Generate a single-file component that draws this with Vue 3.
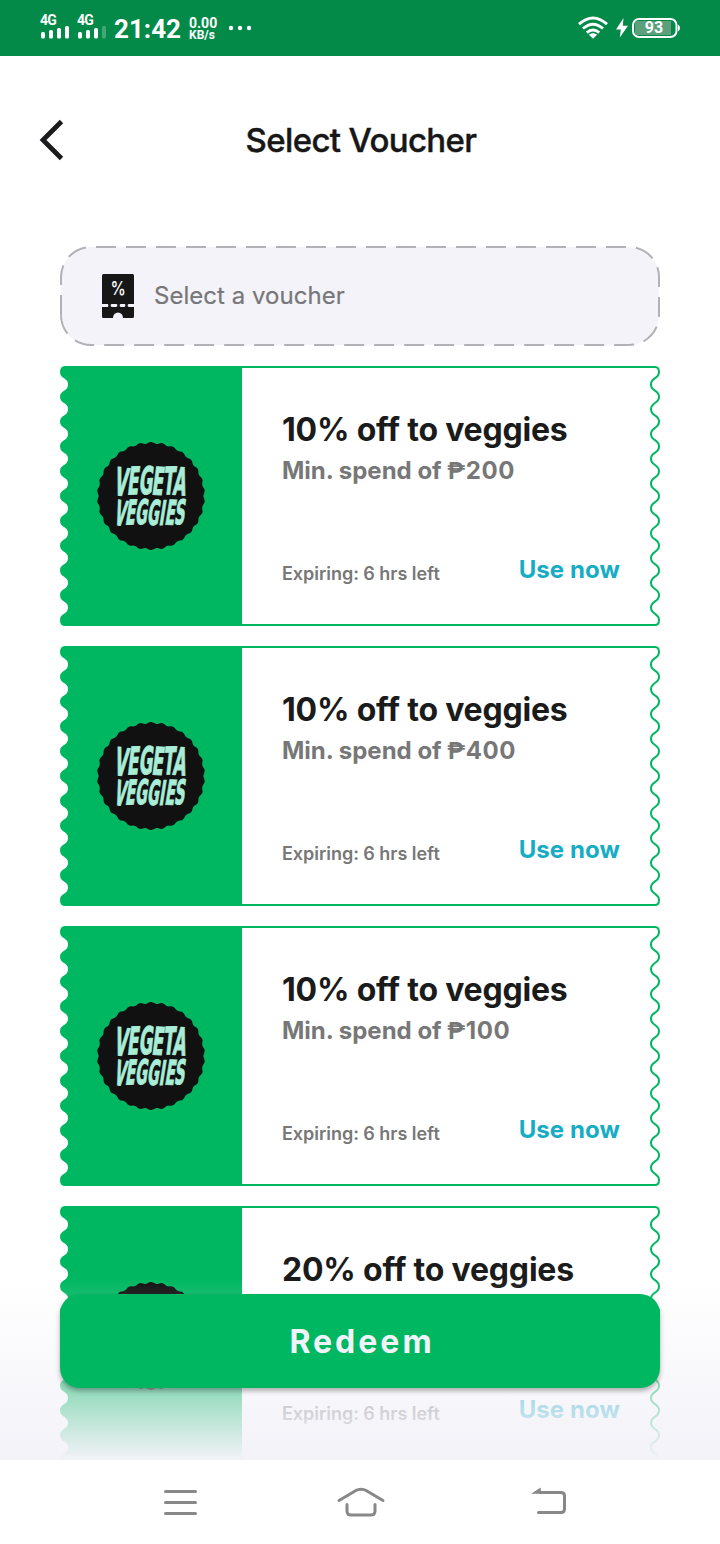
<script setup>
const vouchers = [
  { title: '10% off to veggies', amount: '200' },
  { title: '10% off to veggies', amount: '400' },
  { title: '10% off to veggies', amount: '100' },
  { title: '20% off to veggies', amount: '200' },
]

// Scalloped ticket edge: outward crests at y = 6 + 24.8k, inward troughs between them.
const step = 12.4
function wave(outer, inner) {
  let d = ''
  for (let i = 0; i < 20; i++) {
    const y = 6 + i * step
    const from = i % 2 ? inner : outer
    const to = i % 2 ? outer : inner
    d += ` C${from} ${(y + 7.4).toFixed(1)} ${to} ${(y + 5).toFixed(1)} ${to} ${(y + step).toFixed(1)}`
  }
  return d
}
const rightEdge = `M182 1H595Q599 1 599 6${wave(599, 591)}Q599 259 595 259H182`
const leftEdge = `M182 0H5Q0 0 0 6${wave(0, 8)}Q0 260 5 260H182Z`

// Seal outline with small scallops around a circle.
let seal = ''
for (let i = 0; i <= 360; i++) {
  const a = (i * Math.PI) / 180
  const r = 53.2 + 0.8 * Math.cos(a * 30)
  seal += `${i ? 'L' : 'M'}${(55 + r * Math.sin(a)).toFixed(2)} ${(55 - r * Math.cos(a)).toFixed(2)}`
}
seal += 'Z'
</script>

<template>
  <div class="phone">
    <header class="status">
      <div class="signal">
        <span>4G</span>
        <svg width="30" height="14" viewBox="0 0 30 14" fill="#fff"><rect x="1" y="6" width="4" height="6.5" rx="1.5"/><rect x="9" y="4" width="4" height="8.5" rx="1.5"/><rect x="17" y="2" width="4" height="10.5" rx="1.5"/><rect x="25" y="0" width="4" height="12.5" rx="1.5"/></svg>
      </div>
      <div class="signal second">
        <span>4G</span>
        <svg width="30" height="14" viewBox="0 0 30 14" fill="#fff"><rect x="1" y="6" width="4" height="6.5" rx="1.5"/><rect x="9" y="4" width="4" height="8.5" rx="1.5"/><rect x="17" y="2" width="4" height="10.5" rx="1.5"/><rect x="25" y="0" width="4" height="12.5" rx="1.5" opacity=".25"/></svg>
      </div>
      <span class="clock">21:42</span>
      <div class="speed"><span class="rate">0.00</span><span class="unit">KB/s</span></div>
      <svg class="dots" width="24" height="6" viewBox="0 0 24 6" fill="#fff"><circle cx="3" cy="3" r="2.200"/><circle cx="12" cy="3" r="2.200"/><circle cx="21" cy="3" r="2.200"/></svg>
      <svg class="wifi" width="30" height="24" viewBox="0 0 30 24" fill="none" stroke="#fff" stroke-width="2.900">
        <path d="M1 8.200Q15-4.400 29 8.200"/><path d="M5 12.500Q15 3.900 25 12.500"/><path d="M8.800 16.600Q15 11.400 21.200 16.600"/><path d="M12 18.900Q15 16.800 18 18.900L15 21.700Z" fill="#fff" stroke-width="1.400"/>
      </svg>
      <svg class="bolt" width="12" height="20" viewBox="0 0 12 20"><path d="M7.500 0 0 11.500H4.800L3.800 19.500 12 7.800H6.800Z" fill="#fff"/></svg>
      <div class="battery">
        <svg width="48" height="20" viewBox="0 0 48 20"><rect x="1" y="1" width="43.500" height="18" rx="6" fill="none" stroke="#fff" stroke-width="2"/><path d="M5.500 3H39V17H5.500Q3 17 3 14.500V5.500Q3 3 5.500 3Z" fill="#5b9f7c"/><path d="M46 6.500Q48 7.500 48 10T46 13.500Z" fill="#fff"/></svg>
        <span>93</span>
      </div>
    </header>

    <main class="screen">
      <div class="titlebar">
        <svg class="back" width="26" height="42" viewBox="0 0 26 42" fill="none" stroke="#1b1b1d" stroke-width="4.800"><path d="M22.500 2.500 4 21 22.500 39.500"/></svg>
        <h1>Select Voucher</h1>
      </div>

      <div class="picker">
        <svg class="outline" width="600" height="100" viewBox="0 0 600 100"><path d="M1 69V31A30 30 0 0 1 31 1H569A30 30 0 0 1 599 31V69A30 30 0 0 1 569 99H31A30 30 0 0 1 1 69" fill="#f3f3f9" stroke="#b2b2b6" stroke-width="2" stroke-dasharray="20 10"/></svg>
        <svg class="coupon" width="32" height="44" viewBox="0 0 32 44">
          <path d="M1.500 0H30.500Q32 0 32 1.500V30H0V1.500Q0 0 1.500 0ZM0 33H32V42.500Q32 44 30.500 44H21A5 5.500 0 0 0 11 44H1.500Q0 44 0 42.500Z" fill="#171717"/>
          <path d="M6 29H10V33H6ZM14 29H18.500V33H14ZM22.500 29H27V33H22.500Z" fill="#171717"/>
          <path d="M0 31.500H5M10 31.500H14M19 31.500H22M27 31.500H32" stroke="#f3f3f9" stroke-width="2.800" stroke-linecap="round"/>
          <text x="19.800" y="21" text-anchor="middle" class="percent" transform="scale(.81 1)">%</text>
        </svg>
        <span>Select a voucher</span>
      </div>

      <section class="list">
        <article v-for="(v, i) in vouchers" :key="i" class="voucher">
          <svg class="ticket" width="600" height="260" viewBox="0 0 600 260">
            <path :d="rightEdge" fill="#fff" stroke="#00b761" stroke-width="2"/>
            <path :d="leftEdge" fill="#00b761"/>
          </svg>
          <div class="brand">
            <svg width="110" height="110" viewBox="0 0 110 110">
              <path :d="seal" fill="#111"/>
              <g class="logo">
                <text transform="translate(17.500 53.500) skewX(-7) scale(.49 1)" rotate="4 -1 -2 1 -1 2" x="0 27 51 77 100 120" font-size="38">VEGETA</text>
                <text transform="translate(17.500 83.500) skewX(-9) scale(.47 1)" rotate="4 -1 -2 1 0 1 -2" x="0 24 45 70 96 108 128" font-size="34">VEGGIES</text>
              </g>
            </svg>
          </div>
          <div class="info">
            <h2>{{ v.title }}</h2>
            <p>Min. spend of <span class="peso">₱</span><span class="amount">{{ v.amount }}</span></p>
            <div class="bottom"><span class="expires">Expiring: 6 hrs left</span><a>Use now</a></div>
          </div>
        </article>
      </section>

      <div class="fade"><button>Redeem</button></div>
    </main>

    <nav class="nav">
      <svg width="36" height="30" viewBox="0 0 36 30"><path d="M3.500 3.500H33.500M3.500 14.500H33.500M3.500 25.500H33.500"/></svg>
      <svg class="home" width="50" height="32" viewBox="0 0 50 32"><path d="M3 14.500 19.500 4.700Q25 2 30.500 4.700L47 14.500M11 18.500V25Q11 29 15 29H35Q39 29 39 25V18.500"/></svg>
      <svg class="return" width="38" height="30" viewBox="0 0 38 30"><path d="M10 5.500H31Q34.500 5.500 34.500 9V22Q34.500 25.500 31 25.500H8.500"/><path d="M1 6.800 10.800 .5V6.800Z" class="tip"/></svg>
    </nav>
  </div>
</template>

<style>
body { background: #fff; }
</style>

<style scoped>
.phone { width: 720px; height: 1544px; display: flex; flex-direction: column; overflow: hidden; background: #fff; font-family: Inter, "Liberation Sans", sans-serif; font-optical-sizing: none; }
.status { height: 56px; flex: none; box-sizing: border-box; padding: 0 40px; display: flex; align-items: center; background: #038a49; color: #fff; font-family: Roboto, sans-serif; font-weight: 700; }
.signal { width: 30px; height: 28px; display: flex; flex-direction: column; font-size: 14px; line-height: 13px; letter-spacing: -.7px; gap: 0; }
.signal.second { margin-left: 7px; }
.signal svg { margin-top: -1px; }
.clock { width: 67px; margin-left: 7px; font-size: 26px; line-height: 30px; white-space: nowrap; padding-top: 2px; }
.speed { display: flex; flex-direction: column; margin-left: 8px; width: 28px; white-space: nowrap; }
.rate { font-size: 14px; line-height: 14px; }
.unit { font-size: 12px; line-height: 11px; }
.dots { margin-left: 11px; }
.wifi { margin-left: auto; }
.bolt { margin: 0 4px 0 8px; }
.battery { width: 48px; height: 20px; display: grid; }
.battery > * { grid-area: 1 / 1; }
.battery span { width: 44px; text-align: center; font-size: 16px; line-height: 20px; }

.screen { position: relative; height: 1404px; flex: none; overflow: hidden; }
.titlebar { height: 168px; display: grid; grid-template-columns: 60px 1fr 60px; align-items: center; }
.back { margin-left: 39px; }
h1 { margin: 0 0 0 2px; text-align: center; font-size: 33px; line-height: 40px; font-weight: 500; color: #171717; letter-spacing: -.65px; -webkit-text-stroke: .4px #171717; }
.picker { position: relative; width: 600px; height: 100px; box-sizing: border-box; margin: 22px 60px 20px; padding-left: 42px; display: flex; align-items: center; gap: 20px; color: #77777a; font-size: 24px; letter-spacing: .03px; }
.outline { position: absolute; left: 0; top: 0; }
.coupon { position: relative; }
.picker span { position: relative; padding-bottom: 2px; -webkit-text-stroke: .2px #77777a; }
.percent { font: 500 19px Inter, sans-serif; fill: #fff; letter-spacing: 0; }
.list { margin: 0 60px; display: flex; flex-direction: column; gap: 20px; }
.voucher { position: relative; height: 260px; display: flex; }
.ticket { position: absolute; inset: 0; }
.brand { position: relative; width: 182px; display: grid; place-items: center; }
.brand svg { overflow: visible; }
.logo { fill: #a9ecd7; stroke: #a9ecd7; stroke-width: 1px; font-family: "DejaVu Sans Condensed", "DejaVu Sans", sans-serif; font-weight: 700; }
.info { position: relative; flex: 1; padding: 44px 40px 36px; display: flex; flex-direction: column; white-space: nowrap; }
h2 { margin: 0; font-size: 32px; line-height: 40px; font-weight: 700; color: #1b1b1b; letter-spacing: -.2px; }
p { margin: 2px 0 0; font-size: 24px; line-height: 38px; height: 38px; font-weight: 700; color: #777; }
.peso { display: inline-block; width: 18.5px; font-family: Roboto, sans-serif; line-height: 1; }
.amount { letter-spacing: .5px; }
.bottom { margin-top: auto; display: flex; justify-content: space-between; align-items: flex-end; }
.expires { font-size: 18px; line-height: 32px; font-weight: 600; color: #777; letter-spacing: -.03px; }
a { font-size: 24px; line-height: 40px; font-weight: 700; color: #16adc4; letter-spacing: .08px; }
.fade { position: absolute; left: 0; right: 0; bottom: 0; height: 186px; box-sizing: border-box; padding: 20px 60px 0; background: linear-gradient(rgba(243, 242, 248, 0) 5px, #f3f2f8); }
button { width: 600px; height: 94px; border: 0; padding: 0 0 0 4px; border-radius: 20px; background: #00b761; color: #f0f3fa; font: 700 32px Inter, sans-serif; letter-spacing: 3px; box-shadow: 0 3px 5px rgba(0, 0, 0, .3); }
.nav { height: 84px; flex: none; box-sizing: border-box; padding: 2px 152px 0 162px; display: flex; align-items: center; justify-content: space-between; }
.nav path { fill: none; stroke: #888; stroke-width: 3; stroke-linecap: round; }
.nav .home { margin: 0 7px 3px 0; }
.nav .return { margin-bottom: 2px; }
.nav .tip { fill: #888; stroke: none; }
</style>
